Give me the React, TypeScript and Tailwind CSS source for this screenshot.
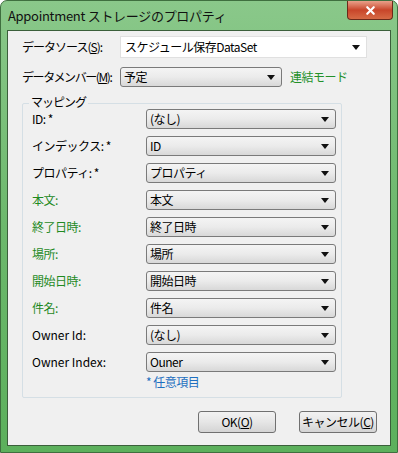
import { X } from 'lucide-react';

const FONT = '"Noto Sans CJK JP", "Noto Sans", sans-serif';

const MAPPING_ROWS = [
  { label: 'ID: *', value: '(なし)', green: false },
  { label: 'インデックス: *', value: 'ID', green: false },
  { label: 'プロパティ: *', value: 'プロパティ', green: false },
  { label: '本文:', value: '本文', green: true },
  { label: '終了日時:', value: '終了日時', green: true },
  { label: '場所:', value: '場所', green: true },
  { label: '開始日時:', value: '開始日時', green: true },
  { label: '件名:', value: '件名', green: true },
  { label: 'Owner Id:', value: '(なし)', green: false },
  { label: 'Owner Index:', value: 'Ouner', green: false },
];

function Arrow() {
  return (
    <svg width="8" height="5" viewBox="0 0 8 5" className="shrink-0">
      <path d="M0 0 H8 L4 5 Z" fill="#111" />
    </svg>
  );
}

function Combo({ value, width }: { value: string; width: string }) {
  return (
    <div
      className={`${width} h-[20px] flex items-center justify-between pl-[3px] pr-[6px] rounded-[3px] border border-[#7a7a7a] bg-gradient-to-b from-[#f4f4f4] via-[#ebebeb] to-[#d8d8d8] text-[12px] text-black`}
    >
      <span className="tracking-[-0.5px]">{value}</span>
      <Arrow />
    </div>
  );
}

function Button({ children }: { children: React.ReactNode }) {
  return (
    <div className="w-[78px] h-[22px] flex items-center justify-center rounded-[3px] border border-[#707070] bg-gradient-to-b from-[#f2f2f2] via-[#e6e6e6] to-[#d4d4d4] text-[12px] text-black tracking-[-0.5px]">
      {children}
    </div>
  );
}

export default function App() {
  return (
    <div
      className="w-[398px] h-[453px] flex flex-col rounded-t-[7px] border border-[#3f6f3f] bg-gradient-to-b from-[#8ac88a] via-[#6cb86c] to-[#5cb05c]"
      style={{ fontFamily: FONT }}
    >
      {/* Title bar */}
      <div className="h-[29px] flex items-start justify-between pl-[7px] pr-[4px]">
        <div className="pt-[5px] text-[13px] text-[#111] tracking-[-0.3px]">Appointment ストレージのプロパティ</div>
        <div className="w-[46px] h-[19px] flex items-center justify-center rounded-b-[4px] border border-[#6a2a1a] border-t-0 bg-gradient-to-b from-[#e8a08a] via-[#c8452a] to-[#d66a45]">
          <X className="w-[13px] h-[13px] text-white" strokeWidth={4} />
        </div>
      </div>

      {/* Client area */}
      <div className="flex-1 mx-[6px] mb-[6px] border border-[#3b5f3b] bg-[#f0f0f0] pl-[14px] pt-[5px] text-[12px] text-black">
        <div className="flex items-center h-[22px]">
          <div className="w-[98px] tracking-[-1px]">データソース(<span className="underline">S</span>):</div>
          <div className="w-[247px] h-[22px] flex items-center justify-between pl-[4px] pr-[6px] bg-white border border-[#e0e0e0]">
            <span className="tracking-[-0.5px]">スケジュール保存DataSet</span>
            <Arrow />
          </div>
        </div>

        <div className="flex items-center mt-[9px] h-[20px]">
          <div className="w-[98px] tracking-[-1.4px]">データメンバー(<span className="underline">M</span>):</div>
          <Combo value="予定" width="w-[162px]" />
          <div className="ml-[8px] text-[#23902a] tracking-[-0.5px]">連結モード</div>
        </div>

        {/* Mapping group */}
        <div className="relative mt-[16px] w-[320px] h-[295px] border border-[#d5dfe5] rounded-[2px] pl-[9px] pt-[5px]">
          <div className="absolute -top-[10px] left-[6px] px-[2px] bg-[#f0f0f0] leading-[16px] tracking-[-1px]">マッピング</div>
          <div className="flex flex-col gap-[7px]">
            {MAPPING_ROWS.map((row) => (
              <div key={row.label} className="flex items-center h-[20px]">
                <div
                  className={`w-[114px] ${row.label.startsWith('Owner') ? 'tracking-[0px]' : 'tracking-[-0.5px]'} ${row.green ? 'text-[#1f8a1f]' : 'text-black'}`}
                >
                  {row.label}
                </div>
                <Combo value={row.value} width="w-[190px]" />
              </div>
            ))}
          </div>
          <div className="ml-[114px] mt-[1px] text-[#1e6fc0] tracking-[-0.5px]">* 任意項目</div>
        </div>

        <div className="flex justify-end gap-[23px] mt-[13px] pr-[13px]">
          <Button>OK(<span className="underline">O</span>)</Button>
          <Button>キャンセル(<span className="underline">C</span>)</Button>
        </div>
      </div>
    </div>
  );
}
